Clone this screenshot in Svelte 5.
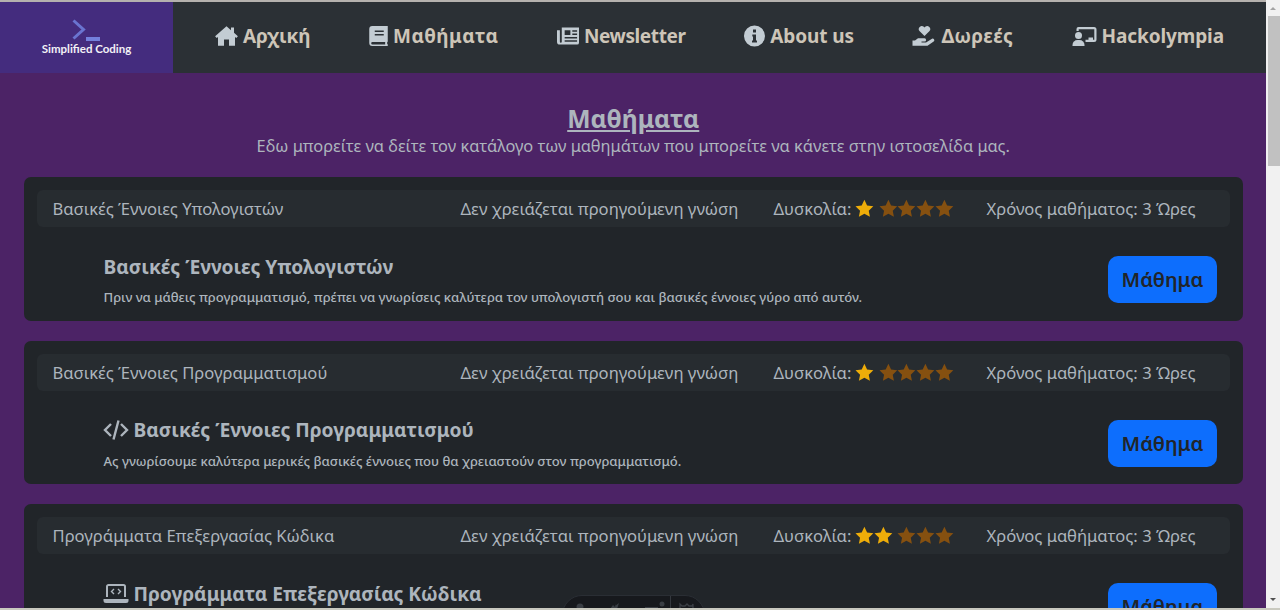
<script>
  const nav = [
    { label: 'Αρχική', icon: 'home', vb: '0.5 0 23 24', w: 23, ls: -0.1 },
    { label: 'Μαθήματα', icon: 'book', vb: '2.5 0 18.5 24', w: 19, ls: 0.5 },
    { label: 'Newsletter', icon: 'news', vb: '0 0 23 24', w: 22, ls: -0.4 },
    { label: 'About us', icon: 'info', vb: '1.5 1.5 21 21', w: 21, ls: -0.1 },
    { label: 'Δωρεές', icon: 'hand', vb: '0 0 23 24', w: 24, ls: 0.3 },
    { label: 'Hackolympia', icon: 'teach', vb: '0 0 24 24', w: 25, ls: -0.1 }
  ];
  const courses = [
    { name: 'Βασικές Έννοιες Υπολογιστών', stars: 1, icon: '', desc: 'Πριν να μάθεις προγραμματισμό, πρέπει να γνωρίσεις καλύτερα τον υπολογιστή σου και βασικές έννοιες γύρο από αυτόν.' },
    { name: 'Βασικές Έννοιες Προγραμματισμού', stars: 1, icon: 'code', desc: 'Ας γνωρίσουμε καλύτερα μερικές βασικές έννοιες που θα χρειαστούν στον προγραμματισμό.' },
    { name: 'Προγράμματα Επεξεργασίας Κώδικα', stars: 2, icon: 'laptop', desc: '' }
  ];
  const star = 'M8 .6l2.3 4.9 5.3.7-3.9 3.7 1 5.3L8 12.6l-4.7 2.6 1-5.3L.4 6.2l5.3-.7z';
</script>

<div class="window">
  <div class="page">
    <header class="nav">
      <div class="brand">
        <svg class="logo" viewBox="0 0 28 24" width="28" height="24">
          <path d="M1.500 1.500 L11.500 10.500 L1.500 19.500" fill="none" stroke="#6a74d0" stroke-width="3" />
          <rect x="14" y="18" width="14" height="4" fill="#7480dc" />
        </svg>
        <span class="brand-name">Simplified Coding</span>
      </div>
      <nav class="links">
        {#each nav as item}
          <a class="link" href="#top" style:letter-spacing="{item.ls}px">
            <svg class="nav-icon" viewBox={item.vb} width={item.w} height="24">
              {#if item.icon === 'home'}
                <path d="M12 2.200 0.600 12.200l1.600 1.800L3.500 13v8.800h6v-6.400h5v6.400h6V13l1.300 1 1.600-1.800-3.900-3.400V3.500h-3v2.700z" />
              {:else if item.icon === 'book'}
                <path fill-rule="evenodd" d="M5.500 2H21v15.500c-.9.6-.9 2.400 0 3V22H5.500A3 3 0 0 1 2.500 19V5A3 3 0 0 1 5.500 2zM8 6.500v1.500h9V6.500zM8 10v1.500h9V10zM5.700 18a1 1 0 0 0 0 2.500H18.500c-.2-.8-.2-1.700 0-2.500z" />
              {:else if item.icon === 'news'}
                <path fill-rule="evenodd" d="M5 3h18v16a2 2 0 0 1-2 2H3a3 3 0 0 1-3-3V6h3v12a1 1 0 0 0 2 0zM8 6v5h6V6zM16 6v1.500h5V6zM16 9.500V11h5V9.500zM8 13v1.500h13V13zM8 16.500V18h13v-1.500z" />
              {:else if item.icon === 'info'}
                <path fill-rule="evenodd" d="M12 1.500a10.500 10.500 0 1 0 0 21 10.500 10.500 0 0 0 0-21zM10.500 5.500h3v3h-3zM9.800 10.500h3.700v6h1v2h-5v-2h1v-4h-.7z" />
              {:else if item.icon === 'hand'}
                <path d="M12 12 7.200 7.200a3.100 3.100 0 0 1 0-4.300 3 3 0 0 1 4.100-.1l.7.600.7-.6a3 3 0 0 1 4.100.1 3.100 3.100 0 0 1 0 4.300z" />
                <path d="M0 16.500h2.500l3-2.200h6.500a1.500 1.500 0 0 1 0 3.200H9v1h4.500l6-3.700a1.600 1.600 0 0 1 2 2.400L15 21.800H0z" />
              {:else}
                <path fill-rule="evenodd" d="M6 3h15.500A2.500 2.500 0 0 1 24 5.500v10a2.500 2.500 0 0 1-2.500 2.500H13v-2.200h3V13.500h4.500v2.300h1.300V5.200H6.200V7H4V5a2 2 0 0 1 2-2z" />
                <circle cx="6" cy="11.500" r="3.500" />
                <path d="M0 21a5 5 0 0 1 5-5h2a5 5 0 0 1 5 5v1H0z" />
              {/if}
            </svg>
            <span>{item.label}</span>
          </a>
        {/each}
      </nav>
    </header>

    <main class="content">
      <h1 class="title">Μαθήματα</h1>
      <p class="lead">Εδω μπορείτε να δείτε τον κατάλογο των μαθημάτων που μπορείτε να κάνετε στην ιστοσελίδα μας.</p>

      {#each courses as c}
        <section class="card">
          <div class="card-head">
            <span class="h-name">{c.name}</span>
            <span class="h-req">Δεν χρειάζεται προηγούμενη γνώση</span>
            <span class="h-diff">Δυσκολία:
              <span class="stars">
                {#each [0, 1, 2, 3, 4] as i}
                  <svg viewBox="0 0 16 16" width="18.800" height="18.800" class:on={i < c.stars} class:split={i === c.stars}><path d={star} /></svg>
                {/each}
              </span>
            </span>
            <span class="h-time">Χρόνος μαθήματος: 3 Ώρες</span>
          </div>
          <div class="card-body">
            <div class="text">
              <h2 class="c-title">
                {#if c.icon === 'code'}
                  <svg class="t-icon" viewBox="0 0 26 24" width="26" height="24"><path d="M8 6 2 12l6 6M18 6l6 6-6 6M15.500 2.500l-5 19" fill="none" stroke="currentColor" stroke-width="2.400" /></svg>
                {:else if c.icon === 'laptop'}
                  <svg class="t-icon" viewBox="0 0 26 24" width="26" height="24"><path d="M4 16V5.500A1.500 1.500 0 0 1 5.500 4h15A1.500 1.500 0 0 1 22 5.500V16" fill="none" stroke="currentColor" stroke-width="2" /><path d="M0.500 18h25v1.500a2.500 2.500 0 0 1-2.500 2.500H3A2.500 2.500 0 0 1 .5 19.500z" fill="currentColor" /><path d="M11 8l-2.500 2.500L11 13M15 8l2.500 2.500L15 13" fill="none" stroke="currentColor" stroke-width="1.400" /></svg>
                {/if}
                {c.name}
              </h2>
              <p class="c-desc">{c.desc}</p>
            </div>
            <button class="btn">Μάθημα</button>
          </div>
        </section>
      {/each}
    </main>

    <div class="dock">
      <svg class="dock-icons" viewBox="0 0 143 14" width="143" height="14">
        <circle cx="18" cy="11" r="3.500" />
        <path d="M48 13l3-4 2 2 1-4-1 3 4-3-2 6z" />
        <rect x="83" y="11" width="13" height="2" />
        <circle cx="100" cy="8" r="2.500" />
        <path d="M118 14v-6l2 2h3l2-2 2 2h3l1-2v6z" fill="none" stroke="#3a3e44" stroke-width="1.300" />
      </svg>
      <span class="dock-divider"></span>
    </div>
  </div>

  <aside class="scrollbar">
    <span class="arrow up"></span>
    <span class="thumb"></span>
    <span class="track"></span>
    <span class="arrow down"></span>
  </aside>
  <div class="edge"></div>
</div>

<style>
  :global(body) {
    margin: 0;
    overflow: hidden;
    background: #4c2366;
  }
  .window {
    position: relative;
    display: flex;
    width: 1280px;
    height: 610px;
    overflow: hidden;
    font-family: "Noto Sans", sans-serif;
  }
  .page {
    position: relative;
    flex: 1;
    min-width: 0;
    height: 610px;
    overflow: hidden;
    background: #4c2366;
    border-top: 2px solid #b5b1ae;
    box-sizing: border-box;
  }
  .nav {
    display: flex;
    height: 71px;
    background: #2b3035;
  }
  .brand {
    display: flex;
    flex-direction: column;
    align-items: center;
    width: 173px;
    padding-top: 17px;
    box-sizing: border-box;
    background: #442c7e;
  }
  .logo {
    margin-left: -1px;
  }
  .brand-name {
    margin-top: -1px;
    font-family: "Lato", sans-serif;
    font-size: 11.500px;
    font-weight: 700;
    line-height: 14px;
    color: #f2f0f6;
  }
  .links {
    flex: 1;
    display: flex;
    align-items: center;
    justify-content: space-between;
    padding: 0 42px 4px 42px;
  }
  .link {
    display: flex;
    align-items: center;
    gap: 5px;
    font-size: 19px;
    font-weight: 700;
    color: #cdc5b8;
    text-decoration: none;
  }
  .nav-icon {
    fill: #c3ccd3;
  }
  .content {
    padding: 0 23px 0 23.500px;
    color: #adb5bd;
  }
  .title {
    margin: 30px 0 0;
    font-size: 24.750px;
    font-weight: 700;
    line-height: 32px;
    text-align: center;
    text-decoration: underline;
  }
  .lead {
    margin: -1px 0 19px;
    font-size: 16.400px;
    line-height: 24px;
    text-align: center;
  }
  .card {
    height: 143.500px;
    margin-bottom: 20px;
    padding: 13px;
    box-sizing: border-box;
    border-radius: 7px;
    background: #212529;
  }
  .card-head {
    display: flex;
    align-items: center;
    height: 37px;
    border-radius: 6px;
    background: #272c30;
    font-size: 16.600px;
    white-space: nowrap;
  }
  .h-name {
    width: 424px;
    padding-left: 16px;
    box-sizing: border-box;
  }
  .h-req {
    width: 313px;
  }
  .h-diff {
    display: flex;
    align-items: center;
    gap: 4px;
    width: 213px;
  }
  .stars {
    display: flex;
  }
  .stars svg {
    fill: #855010;
  }
  .stars svg.on {
    fill: #eead09;
  }
  .stars svg.split {
    margin-left: 4.500px;
  }
  .card-body {
    display: flex;
    justify-content: space-between;
    padding: 25px 13px 0 67px;
  }
  .c-title {
    display: flex;
    align-items: center;
    gap: 5px;
    margin: 0;
    height: 28px;
    font-size: 19.200px;
    font-weight: 700;
    color: #adb5bd;
    white-space: nowrap;
  }
  .t-icon {
    margin-left: -1px;
  }
  .c-desc {
    margin: 7px 0 0;
    font-size: 13.100px;
    font-weight: 500;
    line-height: 20px;
    color: #adb5bd;
  }
  .btn {
    width: 109px;
    height: 47px;
    margin-top: 4px;
    border: 0;
    border-radius: 10px;
    background: #0d6efd;
    color: #212529;
    font-family: inherit;
    font-size: 20px;
    font-weight: 600;
    padding: 0;
  }
  .dock {
    position: absolute;
    left: 562px;
    top: 593px;
    width: 143px;
    height: 40px;
    border-radius: 20px;
    background: #17191d;
    border: 1px solid #2a2e34;
    box-sizing: border-box;
  }
  .dock-icons {
    position: absolute;
    left: -1px;
    top: 0;
    fill: #3a3e44;
  }
  .dock-divider {
    position: absolute;
    left: 107px;
    top: 0;
    bottom: 0;
    width: 1px;
    background: #34383e;
  }
  .scrollbar {
    display: flex;
    flex-direction: column;
    width: 14px;
    background: #f1f1f1;
  }
  .thumb {
    height: 150px;
    margin-left: 2px;
    background: #c1c1c1;
  }
  .track {
    flex: 1;
  }
  .arrow {
    position: relative;
    height: 16px;
  }
  .arrow::after {
    content: "";
    position: absolute;
    left: 4px;
    border-left: 3.500px solid transparent;
    border-right: 3.500px solid transparent;
  }
  .arrow.up::after {
    top: 7px;
    border-bottom: 3.500px solid #a3a3a3;
  }
  .arrow.down::after {
    top: 4px;
    border-top: 3.500px solid #505050;
  }
  .edge {
    position: absolute;
    left: 0;
    right: 0;
    bottom: 0;
    height: 2px;
    background: #c9c9bf;
  }
</style>
